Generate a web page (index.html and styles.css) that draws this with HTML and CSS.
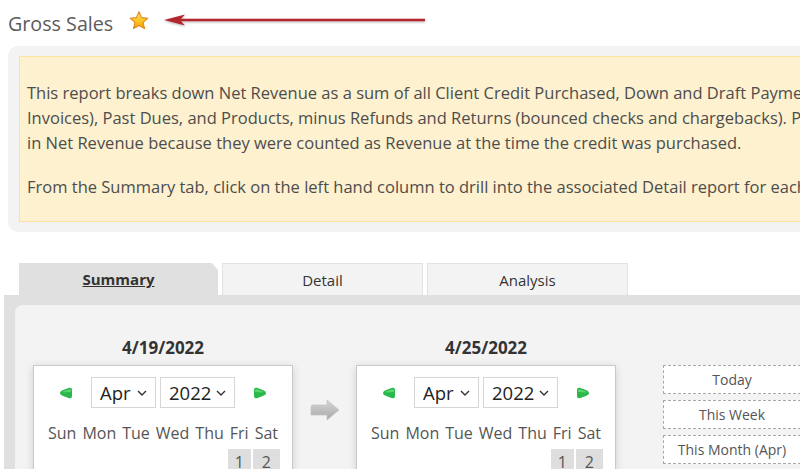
FILE: index.html
```html
<!DOCTYPE html>
<html>
  <head>
    <title>Gross Sales</title>
    <link rel="stylesheet" href="styles.css">
  </head>
  <body>
    <div class="page">
      <div class="title-row">
        <h1 class="title">Gross Sales</h1>
        <!-- favourite star -->
        <svg class="star" width="22" height="22" viewBox="0 0 22 22">
          <defs>
            <linearGradient id="starFill" x1="0" y1="0" x2="0" y2="1">
              <stop offset="0" stop-color="#ffe680"/>
              <stop offset="0.55" stop-color="#fdc322"/>
              <stop offset="1" stop-color="#f29a0c"/>
            </linearGradient>
          </defs>
          <path d="M11 1.8 L13.6 7.6 L19.9 8.2 L15.1 12.4 L16.5 18.6 L11 15.4 L5.5 18.6 L6.9 12.4 L2.1 8.2 L8.4 7.6 Z"
                fill="url(#starFill)" stroke="#e08a1c" stroke-width="1.1" stroke-linejoin="round"/>
        </svg>
        <!-- annotation arrow -->
        <svg class="callout" width="266" height="16" viewBox="0 0 266 16">
          <defs>
            <filter id="soft" x="-5%" y="-50%" width="110%" height="200%">
              <feDropShadow dx="0" dy="1" stdDeviation="0.8" flood-color="#000" flood-opacity="0.3"/>
            </filter>
          </defs>
          <g filter="url(#soft)">
            <line x1="16" y1="7" x2="262" y2="7" stroke="#b3282d" stroke-width="2.6"/>
            <path d="M1 7 L22 1.5 L17 7 L22 12.5 Z" fill="#b3282d"/>
          </g>
        </svg>
      </div>

      <div class="info">
        <div class="note">
          <p>This report breaks down Net Revenue as a sum of all Client Credit Purchased, Down and Draft Payments (on<br>
          Invoices), Past Dues, and Products, minus Refunds and Returns (bounced checks and chargebacks). Payments made with credit are not included<br>
          in Net Revenue because they were counted as Revenue at the time the credit was purchased.</p>
          <p>From the Summary tab, click on the left hand column to drill into the associated Detail report for each category.</p>
        </div>
      </div>

      <div class="tabs">
        <a class="tab active">Summary</a>
        <a class="tab">Detail</a>
        <a class="tab">Analysis</a>
      </div>

      <div class="panel">
        <div class="panel-body">
          <div class="range">
            <div class="cal-col">
              <div class="cal-date">4/19/2022</div>
              <div class="cal">
                <div class="cal-head">
                  <svg class="nav" width="14" height="12" viewBox="0 0 14 12"><path d="M1 6 Q1 4.5 3 3.5 L10 0.8 Q13 0 13 3 L13 9 Q13 12 10 11.2 L3 8.5 Q1 7.5 1 6 Z" fill="#2bb84a"/><path d="M4 4.5 L10 2.3 Q12 2 12 4 L12 5 L4 5.5 Z" fill="#6ee07f" opacity="0.7"/></svg>
                  <select class="sel sel-m"><option>Apr</option></select>
                  <select class="sel sel-y"><option>2022</option></select>
                  <svg class="nav" width="14" height="12" viewBox="0 0 14 12"><path d="M13 6 Q13 4.5 11 3.5 L4 0.8 Q1 0 1 3 L1 9 Q1 12 4 11.2 L11 8.5 Q13 7.5 13 6 Z" fill="#2bb84a"/><path d="M10 4.5 L4 2.3 Q2 2 2 4 L2 5 L10 5.5 Z" fill="#6ee07f" opacity="0.7"/></svg>
                </div>
                <table class="days">
                  <tr><th>Sun</th><th>Mon</th><th>Tue</th><th>Wed</th><th>Thu</th><th>Fri</th><th>Sat</th></tr>
                  <tr><td></td><td></td><td></td><td></td><td></td><td class="day">1</td><td class="day">2</td></tr>
                </table>
              </div>
            </div>

            <svg class="to" width="34" height="26" viewBox="0 0 34 26">
              <defs>
                <linearGradient id="arrowFill" x1="0" y1="0" x2="0" y2="1">
                  <stop offset="0" stop-color="#d6d6d6"/>
                  <stop offset="1" stop-color="#a9a9a9"/>
                </linearGradient>
              </defs>
              <path d="M3 10 Q3 8 5 8 L19 8 L19 3 L31 13 L19 23 L19 18 L3 18 Z" fill="url(#arrowFill)" stroke="#c4c4c4" stroke-width="0.8"/>
            </svg>

            <div class="cal-col">
              <div class="cal-date">4/25/2022</div>
              <div class="cal">
                <div class="cal-head">
                  <svg class="nav" width="14" height="12" viewBox="0 0 14 12"><path d="M1 6 Q1 4.5 3 3.5 L10 0.8 Q13 0 13 3 L13 9 Q13 12 10 11.2 L3 8.5 Q1 7.5 1 6 Z" fill="#2bb84a"/><path d="M4 4.5 L10 2.3 Q12 2 12 4 L12 5 L4 5.5 Z" fill="#6ee07f" opacity="0.7"/></svg>
                  <select class="sel sel-m"><option>Apr</option></select>
                  <select class="sel sel-y"><option>2022</option></select>
                  <svg class="nav" width="14" height="12" viewBox="0 0 14 12"><path d="M13 6 Q13 4.5 11 3.5 L4 0.8 Q1 0 1 3 L1 9 Q1 12 4 11.2 L11 8.5 Q13 7.5 13 6 Z" fill="#2bb84a"/><path d="M10 4.5 L4 2.3 Q2 2 2 4 L2 5 L10 5.5 Z" fill="#6ee07f" opacity="0.7"/></svg>
                </div>
                <table class="days">
                  <tr><th>Sun</th><th>Mon</th><th>Tue</th><th>Wed</th><th>Thu</th><th>Fri</th><th>Sat</th></tr>
                  <tr><td></td><td></td><td></td><td></td><td></td><td class="day">1</td><td class="day">2</td></tr>
                </table>
              </div>
            </div>

            <div class="quick">
              <a class="quick-btn">Today</a>
              <a class="quick-btn">This Week</a>
              <a class="quick-btn">This Month (Apr)</a>
            </div>
          </div>
        </div>
      </div>
    </div>
  </body>
</html>
```

FILE: styles.css
```css
html, body {
  overflow: hidden;
}

body {
  margin: 0;
  font-family: "Open Sans", Lato, sans-serif;
  color: #4d4d4d;
  background: #fff;
}

.page {
  width: 1400px;
}

/* header line with the star and the red callout arrow */
.title-row {
  display: flex;
  align-items: center;
  padding: 9px 0 0 8px;
  height: 28px;
}

.title {
  margin: 0;
  font-size: 19.7px;
  font-weight: normal;
  color: #5b5b5b;
}

.star {
  margin-left: 15px;
  margin-top: -4px;
}

.callout {
  margin-left: 13px;
  margin-top: -4px;
}

/* description box */
.info {
  margin: 9px 0 0 8px;
  padding: 10px 11px;
  background: #f3f3f3;
  border-radius: 10px;
}

.note {
  background: #fdf1cf;
  border: 1px solid #fbe3a1;
  padding: 23px 7px 3px;
  font-size: 16.5px;
  line-height: 25px;
  white-space: nowrap;
}

.note p {
  margin: 0 0 19px;
}

/* tabs */
.tabs {
  display: flex;
  gap: 4px;
  margin: 31px 0 0 19px;
}

.tab {
  width: 201px;
  height: 32px;
  box-sizing: border-box;
  display: flex;
  align-items: center;
  justify-content: center;
  font-size: 15px;
  color: #333;
  background: #f3f3f3;
  border: 1px solid #e2e2e2;
  border-bottom: none;
}

.tab.active {
  width: 199px;
  background: #e0e0e0;
  border: none;
  font-weight: bold;
  text-decoration: underline;
  clip-path: polygon(0 0, 193px 0, 199px 7px, 199px 100%, 0 100%);
}

.panel {
  margin-left: 4px;
  padding: 10px 11px;
  background: #e0e0e0;
  height: 200px;
}

.panel-body {
  background: #f3f3f3;
  border-radius: 8px 0 0 0;
  padding: 31px 18px 0;
  height: 300px;
}

.range {
  display: flex;
  align-items: flex-start;
}

.cal-col {
  width: 260px;
}

.cal-date {
  text-align: center;
  font-size: 17px;
  font-weight: bold;
  color: #333;
  height: 29px;
}

.cal {
  background: #fff;
  border: 1px solid #c9c9c9;
  box-shadow: 0 2px 8px rgba(0, 0, 0, 0.15);
  height: 140px;
  padding-top: 11px;
}

.cal-head {
  display: flex;
  align-items: center;
  justify-content: center;
  gap: 4px;
}

.nav {
  margin: 0 14px;
}

.sel {
  appearance: none;
  height: 31px;
  border: 1px solid #d6d6d6;
  background: #fff url("data:image/svg+xml;utf8,<svg xmlns='http://www.w3.org/2000/svg' width='10' height='6'><path d='M1 1 L5 5 L9 1' fill='none' stroke='%23333' stroke-width='1.4'/></svg>") no-repeat right 8px center;
  font-family: inherit;
  font-size: 18.5px;
  color: #222;
  padding: 0 0 0 8px;
  border-radius: 0;
}

.sel-m {
  width: 65px;
}

.sel-y {
  width: 75px;
}

.days {
  margin: 12px auto 0;
  border-spacing: 2px;
  font-size: 16px;
  color: #555;
}

.days th {
  font-weight: normal;
  padding: 0 2px 3px;
}

.days td {
  height: 24px;
  text-align: center;
}

.days td.day {
  background: #dedede;
  color: #555;
}

.to {
  margin: 61px 14px 0 15px;
}

.quick {
  margin: 29px 0 0 47px;
  display: flex;
  flex-direction: column;
  gap: 6px;
}

.quick-btn {
  width: 138px;
  height: 29px;
  box-sizing: border-box;
  border: 1px dashed #a9a9a9;
  background: #fff;
  display: flex;
  align-items: center;
  justify-content: center;
  font-size: 14px;
  color: #555;
}
```
